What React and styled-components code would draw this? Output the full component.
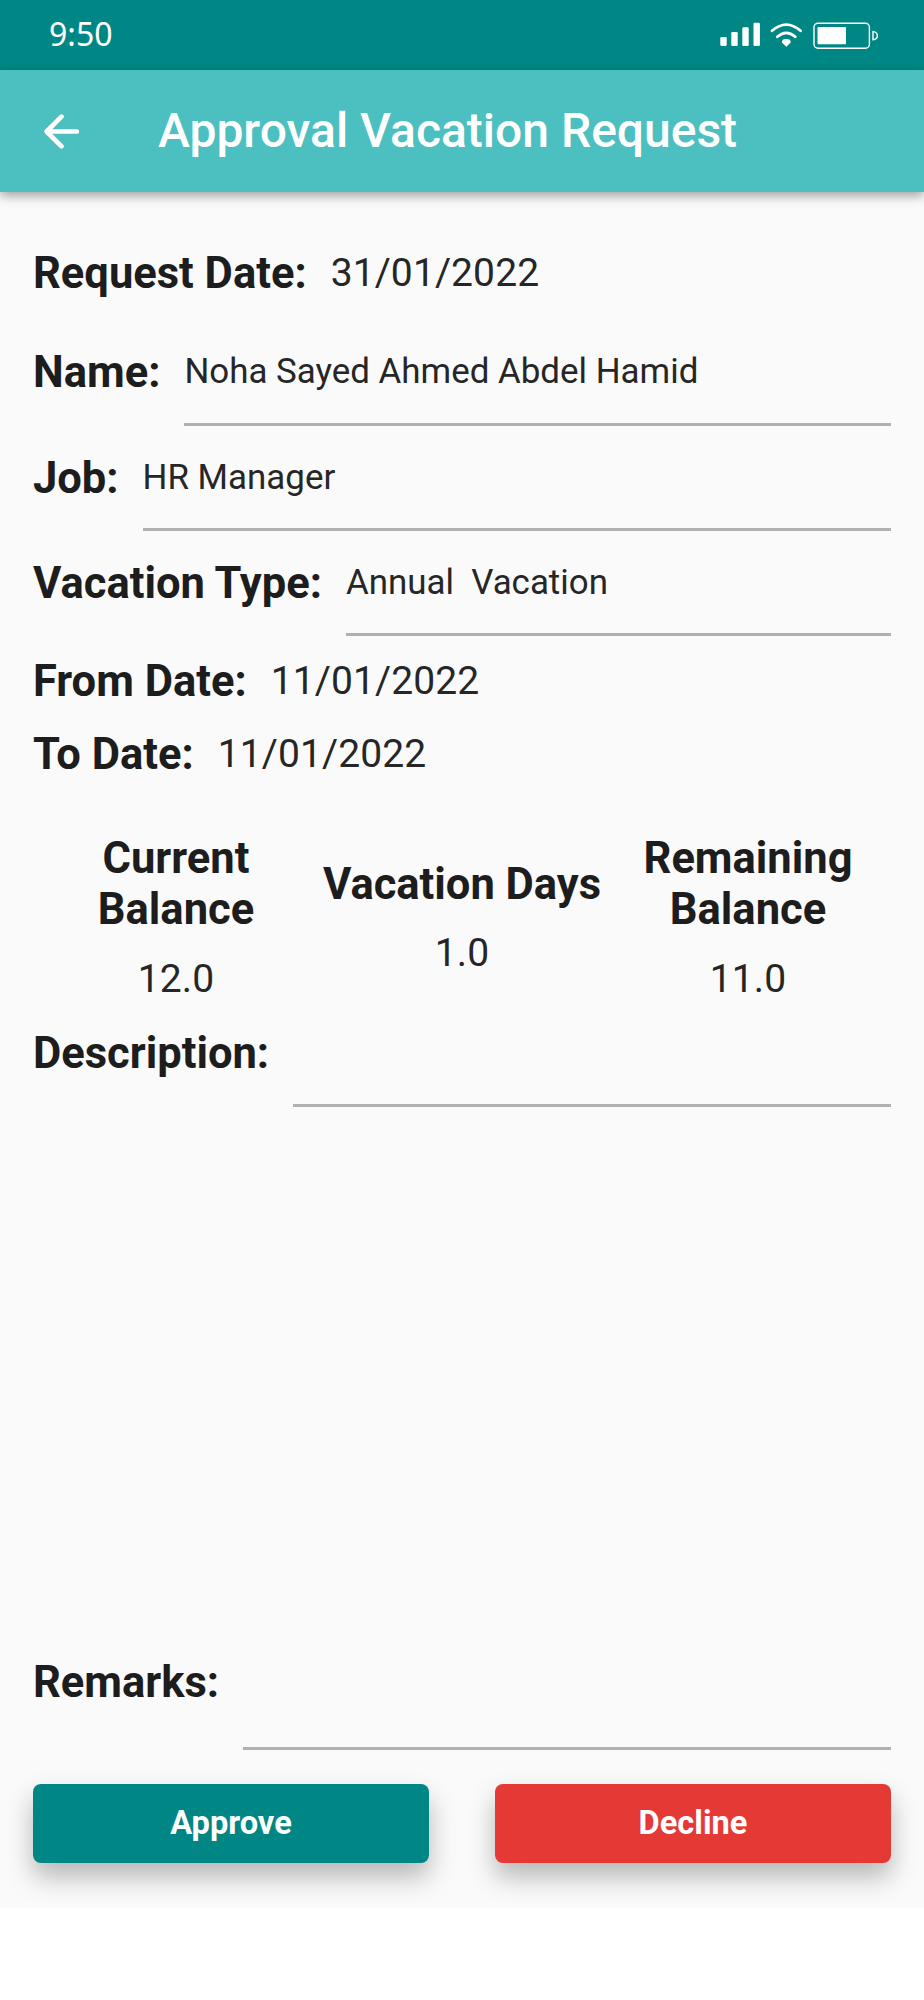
import React from "react";
import styled, { createGlobalStyle } from "styled-components";

const fields = [
  { label: "Name:", value: "Noha Sayed Ahmed Abdel Hamid" },
  { label: "Job:", value: "HR Manager" },
  { label: "Vacation Type:", value: "Annual  Vacation" },
];

const balances = [
  { label: "Current Balance", value: "12.0" },
  { label: "Vacation Days", value: "1.0" },
  { label: "Remaining Balance", value: "11.0" },
];

function StatusIcons() {
  return (
    <svg width="160" height="30" viewBox="0 0 160 30" fill="none">
      <g fill="#fff">
        <rect x="0.3" y="15" width="6.4" height="9" rx="1.2" />
        <rect x="11.3" y="10" width="6.4" height="14" rx="1.2" />
        <rect x="22.3" y="5.3" width="6.4" height="18.7" rx="1.2" />
        <rect x="33.5" y="0.7" width="6.4" height="23.3" rx="1.2" />
        <path d="M66.3 24.7 L61.9 20.4 Q61.5 17 66.3 17 Q71.1 17 70.7 20.4 Z" />
        <rect x="97.5" y="5" width="28.5" height="17.3" rx="1" />
      </g>
      <g stroke="#fff" strokeLinecap="round">
        <path d="M52 8.8 Q66.3 -3.6 80.6 8.8" strokeWidth="2.7" />
        <path d="M57.3 14.8 Q66.3 6.8 75.3 14.8" strokeWidth="2.7" />
        <rect x="94" y="1.2" width="55.4" height="25" rx="4" strokeWidth="1.4" />
        <path d="M153 9.6 V17.8 C158.8 17.2 158.8 10.2 153 9.6 Z" strokeWidth="1.4" />
      </g>
    </svg>
  );
}

export default function App() {
  return (
    <>
      <GlobalStyle />
      <Screen>
        <StatusBar>
          <Clock>9:50</Clock>
          <StatusIcons />
        </StatusBar>
        <AppBar>
          <BackButton aria-label="Back">
            <svg width="36" height="36" viewBox="0 0 36 36" fill="none">
              <path
                d="M34 18.5 H4 M18.5 3.7 L3.6 18.5 L18.5 33.3"
                stroke="#fff"
                strokeWidth="4.6"
                strokeLinecap="round"
                strokeLinejoin="round"
              />
            </svg>
          </BackButton>
          <Title>Approval Vacation Request</Title>
        </AppBar>
        <Form>
          <DateRow>
            <Label>Request Date:</Label>
            <DateValue>31/01/2022</DateValue>
          </DateRow>
          <Fields>
            {fields.map((field) => (
              <FieldRow key={field.label}>
                <Label>{field.label}</Label>
                <Field>{field.value}</Field>
              </FieldRow>
            ))}
          </Fields>
          <Period>
            <DateRow>
              <Label>From Date:</Label>
              <DateValue>11/01/2022</DateValue>
            </DateRow>
            <DateRow>
              <Label>To Date:</Label>
              <DateValue>11/01/2022</DateValue>
            </DateRow>
          </Period>
          <Summary>
            {balances.map((item) => (
              <Balance key={item.label}>
                <BalanceLabel>{item.label}</BalanceLabel>
                <BalanceValue>{item.value}</BalanceValue>
              </Balance>
            ))}
          </Summary>
          <FieldRow>
            <Label>Description:</Label>
            <Field />
          </FieldRow>
          <Spacer />
          <FieldRow $height={134}>
            <Label>Remarks:</Label>
            <Field />
          </FieldRow>
          <Actions>
            <ActionButton $color="#008785">Approve</ActionButton>
            <ActionButton $color="#e53935">Decline</ActionButton>
          </Actions>
        </Form>
      </Screen>
    </>
  );
}

const GlobalStyle = createGlobalStyle`
  * {
    box-sizing: border-box;
  }
  body {
    margin: 0;
    background-color: #fff;
    font-family: Roboto, sans-serif;
  }
`;

const Screen = styled.div`
  display: flex;
  flex-direction: column;
  width: 924px;
  height: 1908px;
  overflow: hidden;
  background-color: #fafafa;
  color: #1d1d1d;
`;

const StatusBar = styled.div`
  display: flex;
  justify-content: space-between;
  align-items: flex-start;
  flex: none;
  height: 70px;
  padding: 22px 44px 0 49px;
  background-color: #008785;
`;

const Clock = styled.span`
  font-family: "Noto Sans", sans-serif;
  font-size: 32px;
  line-height: 24px;
  color: #fff;
`;

const AppBar = styled.header`
  display: flex;
  align-items: center;
  flex: none;
  height: 122px;
  padding-left: 43px;
  background-color: #4cc0c1;
  box-shadow: 0 4px 10px rgba(0, 0, 0, 0.35);
`;

const BackButton = styled.button`
  display: flex;
  width: 36px;
  margin-right: 79px;
  padding: 0;
  border: 0;
  background: none;
`;

const Title = styled.h1`
  margin: 0;
  padding-bottom: 1px;
  font-size: 48px;
  font-weight: 500;
  color: #fff;
`;

const Form = styled.main`
  display: flex;
  flex-direction: column;
  flex: 1;
  padding: 46px 33px 45px;
`;

const DateRow = styled.div`
  display: flex;
  align-items: center;
  height: 72.6px;
`;

const Label = styled.span`
  margin-right: 24px;
  font-size: 43.5px;
  font-weight: 700;
  line-height: 50px;
  white-space: nowrap;
`;

const DateValue = styled.span`
  padding-bottom: 2px;
  font-size: 39px;
  letter-spacing: 0.1px;
  color: #262626;
`;

const Fields = styled.div`
  margin-top: 10px;
`;

const FieldRow = styled.div`
  display: flex;
  align-items: center;
  flex: none;
  height: ${(props) => props.$height || 105.3}px;
`;

const Field = styled.div`
  display: flex;
  align-items: center;
  flex: 1;
  height: 100%;
  border-bottom: 3px solid #b0b0b0;
  font-size: 34.9px;
  white-space: pre;
  color: #262626;
`;

const Period = styled.div`
  margin-top: 9.6px;
`;

const Summary = styled.div`
  display: grid;
  grid-template-columns: repeat(3, 1fr);
  align-items: center;
  margin-top: 42px;
`;

const Balance = styled.div`
  display: flex;
  flex-direction: column;
  align-items: center;
  gap: 20.5px;
  text-align: center;
`;

const BalanceLabel = styled.span`
  font-size: 43.5px;
  font-weight: 700;
  line-height: 51px;
`;

const BalanceValue = styled.span`
  font-size: 39px;
  line-height: 46px;
  letter-spacing: 0.1px;
  color: #262626;
`;

const Spacer = styled.div`
  flex: 1;
`;

const Actions = styled.div`
  display: grid;
  grid-template-columns: 1fr 1fr;
  gap: 66px;
  margin-top: 34px;
`;

const ActionButton = styled.button`
  height: 79px;
  padding: 0 0 2px;
  border: 0;
  border-radius: 8px;
  background-color: ${(props) => props.$color};
  box-shadow: 0 14px 26px rgba(0, 0, 0, 0.27);
  color: #fff;
  font-family: inherit;
  font-size: 32.6px;
  font-weight: 700;
`;
